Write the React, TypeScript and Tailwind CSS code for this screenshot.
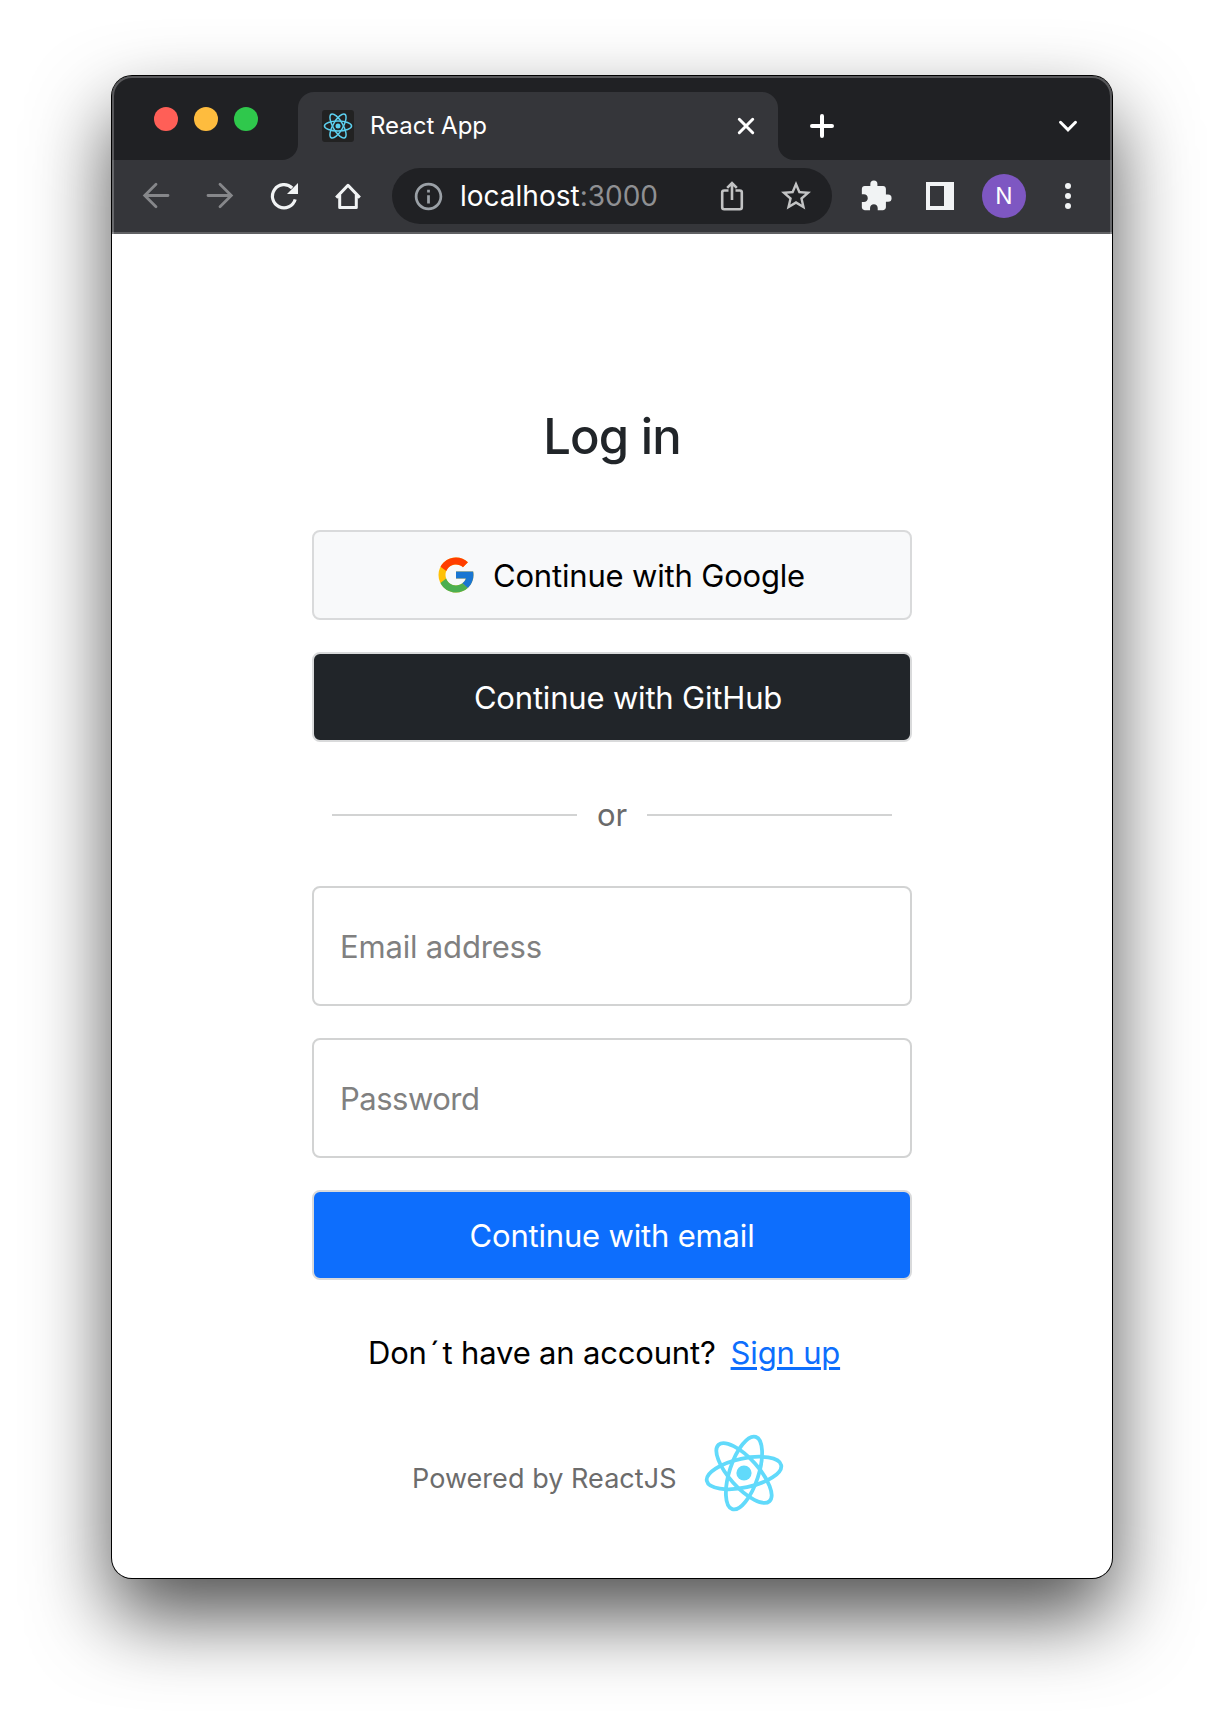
import React from "react";
import { FcGoogle } from "react-icons/fc";
import { MdExtension, MdInfoOutline, MdRefresh, MdStarOutline } from "react-icons/md";

function ReactMark({ className, tilt, stroke, core, ry }: { className: string; tilt: number; stroke: number; core: number; ry: number }) {
  return (
    <svg viewBox="-42 -42 84 84" className={className} fill="none" stroke="currentColor" strokeWidth={stroke}>
      {[0, 60, 120].map((angle) => (
        <ellipse key={angle} rx="38" ry={ry} transform={`rotate(${angle + tilt})`} />
      ))}
      <circle r={core} fill="currentColor" stroke="none" />
    </svg>
  );
}

function TabStrip() {
  return (
    <div className="flex h-[84px] bg-[#35363a]">
      <div className="flex w-[186px] gap-4 rounded-br-[16px] bg-[#202124] pt-[31px] pl-[42px]">
        <span className="size-6 rounded-full bg-[#ff5f57]" />
        <span className="size-6 rounded-full bg-[#febc3e]" />
        <span className="size-6 rounded-full bg-[#2fc84c]" />
      </div>
      <div className="w-[480px] bg-[#202124] pt-4">
        <div className="flex h-[68px] items-center rounded-t-[16px] bg-[#35363a] pr-6 pl-6">
          <span className="flex size-8 items-center justify-center rounded-[3px] bg-[#222222] pb-px text-[#5ccfee]">
            <ReactMark className="size-[30px]" tilt={0} stroke={4.2} core={7} ry={14} />
          </span>
          <span className="ml-4 text-[24px] leading-none text-white">React App</span>
          <svg viewBox="0 0 16 16" className="ml-auto size-4 overflow-visible" stroke="#fff" strokeWidth="3" strokeLinecap="round">
            <path d="M1.3 1.3 14.7 14.7M14.7 1.3 1.3 14.7" />
          </svg>
        </div>
      </div>
      <div className="flex flex-1 items-center justify-between rounded-bl-[16px] bg-[#202124] pt-4 pr-[35px] pl-8">
        <svg viewBox="0 0 24 24" className="size-6" stroke="#fff" strokeWidth="4" strokeLinecap="round">
          <path d="M12 2V22M2 12H22" />
        </svg>
        <svg viewBox="0 0 18 12" className="h-3 w-[18px] overflow-visible" fill="none" stroke="#fff" strokeWidth="3" strokeLinecap="round">
          <path d="M1.5 2.3 9 9.9 16.5 2.3" />
        </svg>
      </div>
    </div>
  );
}

function Toolbar() {
  return (
    <div className="flex h-[74px] items-center border-b-2 border-[#606164] bg-[#35363a] pl-[31px] text-[#f1f3f4]">
      <svg viewBox="0 0 26 26" className="size-[26px] overflow-visible" fill="none" stroke="#86878a" strokeWidth="2.8" strokeLinecap="round">
        <path d="M25 12.5H2M13 1.2 1.7 12.5 13 23.8" />
      </svg>
      <svg viewBox="0 0 26 26" className="ml-[38px] size-[26px] overflow-visible" fill="none" stroke="#86878a" strokeWidth="2.8" strokeLinecap="round">
        <path d="M1 12.5H24M13 1.2 24.3 12.5 13 23.8" />
      </svg>
      <svg viewBox="0 0 27 26" className="ml-[38px] h-[26px] w-[27px] overflow-visible" fill="none" stroke="currentColor" strokeWidth="3.2">
        <path d="M24.2 16.4A11.6 11.6 0 1 1 21.2 5" />
        <path d="M27 0V11H16Z" fill="currentColor" stroke="none" />
      </svg>
      <svg viewBox="0 0 26 26" className="ml-[37px] size-[26px] overflow-visible" fill="none" stroke="currentColor" strokeWidth="3">
        <path d="M1.2 14.6 13 2.3 24.8 14.6M4.7 12V24.5H21.3V12" strokeLinejoin="round" />
      </svg>
      <div className="ml-[31px] flex h-14 w-[440px] items-center rounded-full bg-[#202124] pl-5">
        <MdInfoOutline className="size-[33px] text-[#9aa0a6]" />
        <span className="ml-[15px] text-[28px] leading-none text-white">
          localhost<span className="text-[#8f9093]">:3000</span>
        </span>
        <svg viewBox="0 0 22 30" className="ml-auto h-[30px] w-[22px] overflow-visible" fill="none" stroke="#c2c3c4" strokeWidth="2.6">
          <path d="M7.5 9.5H3.2Q1.2 9.5 1.2 11.5V26.2Q1.2 28.2 3.2 28.2H18.8Q20.8 28.2 20.8 26.2V11.5Q20.8 9.5 18.8 9.5H14.5M11 19V2.5M6.2 6.8 11 2 15.8 6.8" />
        </svg>
        <MdStarOutline className="mr-[18px] ml-[35px] size-[36px] text-[#c2c3c4]" />
      </div>
      <MdExtension className="mr-[-1px] ml-[27px] size-[34px]" />
      <span className="ml-[34px] flex size-7 bg-[#f1f3f4] p-1">
        <span className="w-[14px] bg-[#35363a]" />
      </span>
      <span className="ml-7 flex size-11 items-center justify-center rounded-full bg-[#7e57c2] text-[23px] leading-none text-white">N</span>
      <span className="ml-[39px] flex flex-col gap-1">
        <span className="size-1.5 rounded-full bg-[#f1f3f4]" />
        <span className="size-1.5 rounded-full bg-[#f1f3f4]" />
        <span className="size-1.5 rounded-full bg-[#f1f3f4]" />
      </span>
    </div>
  );
}

function LoginPage() {
  return (
    <form className="mx-auto flex w-[600px] flex-col pt-[173px] text-[31px] leading-[48px] tracking-[-0.18px] text-black">
      <h1 className="text-center text-[49px] leading-[60px] font-medium tracking-[-0.8px] text-[#212529]">Log in</h1>
      <button type="button" className="mt-[63px] flex h-[90px] items-center rounded-[8px] border-2 border-[#d9dadb] bg-[#f8f9fa] pl-[121px]">
        <FcGoogle className="size-[42px]" />
        <span className="ml-4 pt-0.5">Continue with Google</span>
      </button>
      <button type="button" className="mt-8 h-[90px] rounded-[8px] border-2 border-[#d9dadb] bg-[#212529] pt-0.5 pl-8 text-white">
        Continue with GitHub
      </button>
      <div className="mt-[49px] flex h-[48px] items-center px-5 text-[#6a6a6a]">
        <span className="h-0.5 flex-1 bg-[#d2d3d3]" />
        <span className="w-[70px] text-center">or</span>
        <span className="h-0.5 flex-1 bg-[#d2d3d3]" />
      </div>
      <input type="email" placeholder="Email address" className="mt-[47px] h-[120px] rounded-[8px] border-2 border-[#d2d3d3] px-[26px] pt-px placeholder:text-[#808080]" />
      <input type="password" placeholder="Password" className="mt-8 h-[120px] rounded-[8px] border-2 border-[#d2d3d3] px-[26px] pt-px tracking-[-0.5px] placeholder:text-[#808080]" />
      <button type="button" className="mt-8 h-[90px] rounded-[8px] border-2 border-[#d9dadb] bg-[#0d6efd] pt-0.5 text-white">
        Continue with email
      </button>
      <p className="mt-[49px] flex pl-[56px] whitespace-nowrap">
        <span>
          Don<span className="mx-[3px]">´</span>t have an account?
        </span>
        <a className="ml-[15px] text-[#0d6efd] underline decoration-[3px] underline-offset-[3px]">Sign up</a>
      </p>
      <div className="mt-[54px] flex h-[84px] items-center pl-[100px] text-[27px] tracking-[0.05px] text-[#6c6c6c]">
        <span className="w-[290px] pt-[11px] whitespace-nowrap">Powered by ReactJS</span>
        <ReactMark className="size-[84px] text-[#61dafb]" tilt={-12} stroke={3.8} core={7.6} ry={14.5} />
      </div>
    </form>
  );
}

export default function App() {
  return (
    <div className="h-[1726px] w-[1224px] overflow-hidden bg-white pt-[76px] pl-[112px] font-['Inter',sans-serif]">
      <div className="relative h-[1502px] w-[1000px] overflow-hidden rounded-[20px] bg-white shadow-[0_0_0_1px_#000,0_38px_80px_rgba(0,0,0,0.69)]">
        <TabStrip />
        <Toolbar />
        <LoginPage />
        <div className="pointer-events-none absolute inset-x-0 top-0 h-[158px] rounded-t-[20px] border-x-2 border-t-2 border-white/25" />
      </div>
    </div>
  );
}
